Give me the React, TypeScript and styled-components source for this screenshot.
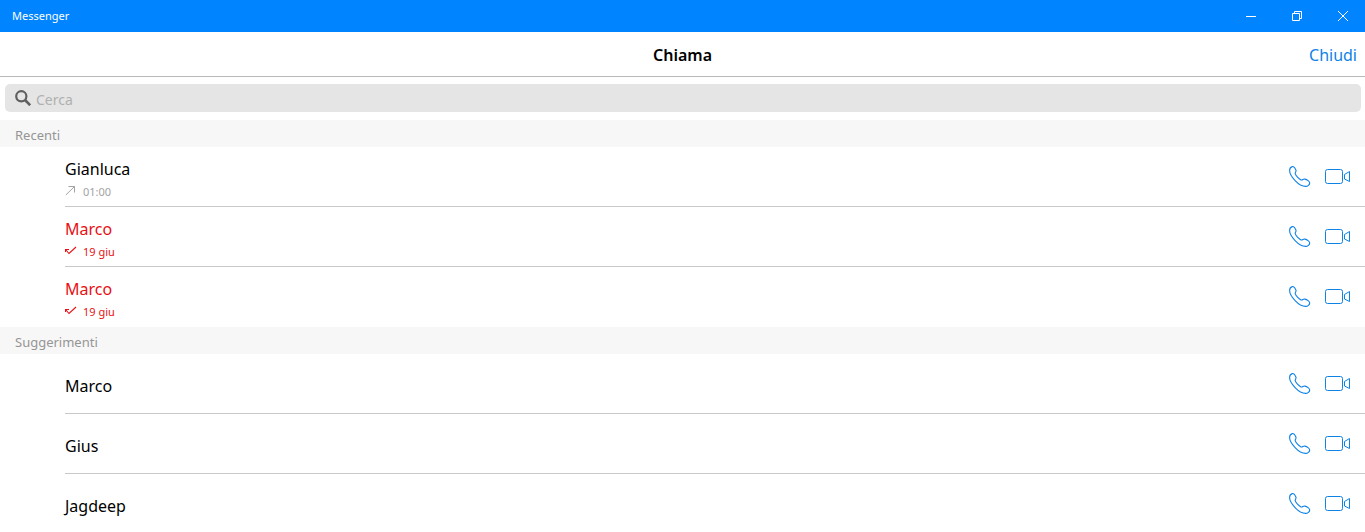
import React from "react";
import styled, { createGlobalStyle } from "styled-components";

const BLUE = "#0084ff";
const LINK = "#0f82e6";
const RED = "#e81014";

const GlobalStyle = createGlobalStyle`
  * { box-sizing: border-box; }
  body {
    margin: 0;
    background: #fff;
    color: #000;
    font-family: "Segoe UI", "Noto Sans", "Open Sans", sans-serif;
  }
  button, input { font-family: inherit; }
  h1, h2, ul { margin: 0; padding: 0; }
`;

const Window = styled.div`
  display: flex;
  flex-direction: column;
  height: 100vh;
  overflow: hidden;
`;

const TitleBar = styled.div`
  flex: none;
  display: flex;
  align-items: center;
  justify-content: space-between;
  height: 32px;
  padding-left: 12px;
  background: ${BLUE};
  color: #fff;
  font-size: 11px;
  line-height: 16px;
`;

const WindowControls = styled.div`
  display: flex;
`;

const IconButton = styled.button`
  display: flex;
  align-items: center;
  justify-content: center;
  padding: 0;
  border: 0;
  background: none;
  color: inherit;
  cursor: pointer;
`;

const WindowButton = styled(IconButton)`
  width: 46px;
  height: 32px;
  padding-left: 2px;
`;

const Header = styled.header`
  flex: none;
  display: grid;
  grid-template-columns: 1fr auto 1fr;
  align-items: center;
  height: 45px;
  padding: 2px 8px 0;
  border-bottom: 1px solid #b9b9b9;
`;

const Title = styled.h1`
  grid-column: 2;
  font-size: 16px;
  line-height: 24px;
  font-weight: 600;
  color: #000;
`;

const CloseButton = styled.button`
  justify-self: end;
  padding: 0;
  border: 0;
  background: none;
  color: ${LINK};
  font-size: 16px;
  line-height: 24px;
  cursor: pointer;
`;

const SearchBar = styled.label`
  flex: none;
  display: flex;
  align-items: center;
  gap: 5px;
  height: 28px;
  margin: 7px 4px 8px 5px;
  padding: 0 10px;
  border-radius: 5px;
  background: #e5e5e5;
`;

const SearchInput = styled.input`
  flex: 1;
  min-width: 0;
  height: 28px;
  padding: 3px 0 0;
  border: 0;
  outline: 0;
  background: none;
  font-size: 14px;
  color: #333;
  &::placeholder { color: #b0b0b0; opacity: 1; }
`;

const List = styled.main`
  flex: 1;
  min-height: 0;
  overflow: hidden;
`;

const SectionTitle = styled.h2`
  height: 27px;
  padding: 4px 15px 0;
  background: #f7f7f7;
  color: #959595;
  font-size: 13px;
  line-height: 22px;
  font-weight: 400;
`;

const Rows = styled.ul`
  list-style: none;
`;

const Row = styled.li`
  display: flex;
  align-items: center;
  justify-content: space-between;
  height: 60px;
  margin-left: 65px;
  padding-right: 14px;
  border-bottom: 1px solid #c8c8c8;
  &:last-child { border-bottom-color: transparent; }
`;

const Person = styled.div<{ $detailed: boolean; $missed?: boolean }>`
  padding-top: ${(p) => (p.$detailed ? 6 : 4)}px;
  color: ${(p) => (p.$missed ? RED : "#000")};
`;

const Name = styled.div`
  font-size: 16px;
  line-height: 24px;
`;

const Detail = styled.div<{ $missed?: boolean }>`
  display: flex;
  gap: 6px;
  color: ${(p) => (p.$missed ? RED : "#a3a3a3")};
  font-size: 11px;
  line-height: 22px;
`;

const Actions = styled.div`
  display: flex;
  gap: 14px;
  color: ${LINK};
`;

const OutgoingIcon = () => (
  <svg width="12" height="18" viewBox="0 0 12 18" fill="none" stroke="currentColor">
    <path d="M.8 14 9.500 5.500M3.500 5.500h6V11.500" />
  </svg>
);

const MissedIcon = () => (
  <svg width="12" height="18" viewBox="0 0 12 18" fill="none" stroke="currentColor" strokeWidth="1.100">
    <path d="M.5 11V8.500H4M.5 8.500l3.500 4L11 6" />
  </svg>
);

const SearchIcon = () => (
  <svg width="16" height="16" viewBox="0 0 16 16" fill="none" stroke="#5f5f5f">
    <circle cx="6.3" cy="6.3" r="5.1" strokeWidth="2.2" />
    <path d="m10 10 5.2 5.2" strokeWidth="2.6" />
  </svg>
);

const PhoneIcon = () => (
  <svg width="22" height="22" viewBox="0 0 22 22" fill="none" stroke="currentColor" strokeWidth="1.1" strokeLinejoin="round">
    <path d="M3.200.6C4.700.2 6.200 2.300 6.900 4C7.600 5.900 5.800 6.300 6.200 7.700C6.800 9.700 9.700 12.900 12 13.900C13.700 14.600 14 12.700 15.900 13.100C17.900 13.500 20.800 15.600 20.700 17.100C20.600 18.700 18.700 20.400 16.700 20.400C13.300 20.400 9.300 18.100 6.100 14.700C3.100 11.500.6 7.800.6 4.600C.6 2.600 1.900 1 3.200.6Z" />
  </svg>
);

const VideoIcon = () => (
  <svg width="26" height="16" viewBox="0 0 26 16" fill="none" stroke="currentColor" strokeLinejoin="round">
    <rect x=".5" y=".5" width="17" height="14" rx="2" />
    <path d="M19.500 5.500 24.500 2.500v10l-5-2.500Z" />
  </svg>
);

type Contact = { name: string; time?: string; missed?: boolean };

const recents: Contact[] = [
  { name: "Gianluca", time: "01:00" },
  { name: "Marco", time: "19 giu", missed: true },
  { name: "Marco", time: "19 giu", missed: true },
];

const suggestions: Contact[] = [{ name: "Marco" }, { name: "Gius" }, { name: "Jagdeep" }];

const ContactRow = ({ name, time, missed }: Contact) => (
  <Row>
    <Person $detailed={Boolean(time)} $missed={missed}>
      <Name>{name}</Name>
      {time && (
        <Detail $missed={missed}>
          {missed ? <MissedIcon /> : <OutgoingIcon />}
          <span>{time}</span>
        </Detail>
      )}
    </Person>
    <Actions>
      <IconButton aria-label={`Chiama ${name}`}><PhoneIcon /></IconButton>
      <IconButton aria-label={`Videochiama ${name}`}><VideoIcon /></IconButton>
    </Actions>
  </Row>
);

const ContactSection = ({ title, contacts }: { title: string; contacts: Contact[] }) => (
  <section>
    <SectionTitle>{title}</SectionTitle>
    <Rows>
      {contacts.map((c, i) => <ContactRow key={i} {...c} />)}
    </Rows>
  </section>
);

export default function App() {
  return (
    <Window>
      <GlobalStyle />
      <TitleBar>
        <span>Messenger</span>
        <WindowControls>
          <WindowButton aria-label="Riduci a icona">
            <svg width="10" height="10" fill="none" stroke="currentColor"><path d="M0 5.500h10" /></svg>
          </WindowButton>
          <WindowButton aria-label="Ripristina">
            <svg width="10" height="10" fill="none" stroke="currentColor">
              <path d="M.5 2.500h7v7h-7zM2.500 2.500v-2h7v7h-2" />
            </svg>
          </WindowButton>
          <WindowButton aria-label="Chiudi finestra">
            <svg width="10" height="10" fill="none" stroke="currentColor"><path d="m0 0 10 10M10 0 0 10" /></svg>
          </WindowButton>
        </WindowControls>
      </TitleBar>
      <Header>
        <Title>Chiama</Title>
        <CloseButton>Chiudi</CloseButton>
      </Header>
      <SearchBar>
        <SearchIcon />
        <SearchInput type="text" placeholder="Cerca" aria-label="Cerca" />
      </SearchBar>
      <List>
        <ContactSection title="Recenti" contacts={recents} />
        <ContactSection title="Suggerimenti" contacts={suggestions} />
      </List>
    </Window>
  );
}
